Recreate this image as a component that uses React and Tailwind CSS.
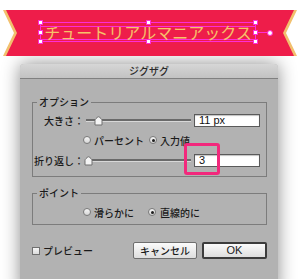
import React from 'react';

const jp = "font-['Noto_Sans_CJK_JP','Noto_Sans',sans-serif]";

const Handle = ({ className }) => (
    <span className={`absolute w-[5px] h-[5px] bg-white border border-[#ff2cd6] ${className}`} />
);

const Radio = ({ checked }) => (
    <span className="w-[8px] h-[8px] rounded-full border border-[#7a7a7a] bg-gradient-to-b from-[#f6f6f6] to-[#d6d6d6] flex items-center justify-center">
        {checked && <span className="w-[3px] h-[3px] rounded-full bg-[#1e1e1e]" />}
    </span>
);

const Slider = ({ thumbClass }) => (
    <div className="relative w-[105px] h-[12px] flex items-center">
        <div className="w-full h-[3px] bg-[#6a6a6a] border-b border-[#d8d8d8]" />
        <svg className={`absolute top-[1px] ${thumbClass}`} width="9" height="10" viewBox="0 0 9 10">
            <path d="M1 9 V4.5 Q1 3.5 2 2.5 L3.8 1 Q4.5 0.5 5.2 1 L7 2.5 Q8 3.5 8 4.5 V9 Z" fill="#f4f4f4" stroke="#707070" strokeWidth="1" />
        </svg>
    </div>
);

const Field = ({ children }) => (
    <div className="ml-[3px] w-[66px] h-[13px] bg-white border border-[#5a5a5a] shadow-[inset_0_1px_1px_rgba(0,0,0,0.25)] flex items-center pl-[4px] text-[11px] font-normal leading-none text-[#111] font-['Liberation_Sans',sans-serif]">
        {children}
    </div>
);

const App = () => {
    return (
        <div className={`w-[300px] h-[279px] overflow-hidden bg-white ${jp}`}>
            {/* ribbon */}
            <div className="relative mt-[10px] h-[46px] flex items-center">
                <svg className="absolute inset-0" width="300" height="46" viewBox="0 0 300 46">
                    <polygon points="3,0 297,0 286,23 297,46 3,46 14,23" fill="#f2c06e" />
                    <polygon points="6,0 294,0 283,23 294,46 6,46 17,23" fill="#ee1d4a" />
                </svg>
                <div className="relative ml-[40px] w-[216px] h-[20px] border border-[#ff2cd6] flex items-center justify-center -mt-[2px]">
                    <span className="absolute left-0 right-0 top-[3px] h-[14px] border-y border-[#ff2cd6]" />
                    <span className="relative text-[16px] leading-none text-[#f6c26a]">チュートリアルマニアックス</span>
                    <Handle className="-left-[3px] -top-[3px]" />
                    <Handle className="left-[105px] -top-[3px]" />
                    <Handle className="-right-[3px] -top-[3px]" />
                    <Handle className="-left-[3px] top-[7px]" />
                    <Handle className="-right-[3px] top-[7px]" />
                    <Handle className="-left-[3px] -bottom-[3px]" />
                    <Handle className="left-[105px] -bottom-[3px]" />
                    <Handle className="-right-[3px] -bottom-[3px]" />
                    <span className="absolute left-[216px] top-[9px] w-[11px] h-[1px] bg-[#ff2cd6]" />
                    <span className="absolute left-[226px] top-[7px] w-[6px] h-[6px] rounded-full bg-white border border-[#ff2cd6]" />
                </div>
            </div>

            {/* dialog */}
            <div className="ml-[20px] mt-[8px] w-[258px] h-[230px] rounded-t-[4px] bg-[#b2b2b2] shadow-[0_0_18px_rgba(0,0,0,0.45)]">
                <div className="h-[15px] rounded-t-[4px] bg-gradient-to-b from-[#d6d6d6] to-[#c2c2c2] border-b border-[#808080] flex items-center justify-center text-[10px] font-medium leading-none text-[#2a2a2a]">
                    ジグザグ
                </div>

                <div className="px-[12px] pr-[11px] pt-[17px] text-[10px] font-medium text-[#1a1a1a]">
                    <fieldset className="border border-[#7c7c7c] pb-[9px]">
                        <legend className="ml-[4px] px-[2px] leading-[12px]">オプション</legend>
                        <div className="flex items-center mt-[6px] h-[13px]">
                            <span className="w-[51px] text-right">大きさ：</span>
                            <div className="ml-[2px]"><Slider thumbClass="left-[8px]" /></div>
                            <Field>11 px</Field>
                        </div>
                        <div className="flex items-center mt-[7px] h-[12px]">
                            <div className="ml-[50px] w-[66px] flex items-center gap-[3px]"><Radio />パーセント</div>
                            <div className="flex items-center gap-[3px]"><Radio checked />入力値</div>
                        </div>
                        <div className="flex items-center mt-[8px] h-[13px]">
                            <span className="w-[51px] text-right">折り返し：</span>
                            <div className="ml-[2px]"><Slider thumbClass="left-[-2px]" /></div>
                            <div className="relative">
                                <Field>3</Field>
                                <span className="absolute -left-[7px] -top-[11px] w-[36px] h-[32px] rounded-[3px] border-[3px] border-[#f2287c]" />
                            </div>
                        </div>
                    </fieldset>

                    <fieldset className="mt-[10px] border border-[#7c7c7c] pb-[6px]">
                        <legend className="ml-[4px] px-[2px] leading-[12px]">ポイント</legend>
                        <div className="flex items-center mt-[7px] h-[12px]">
                            <div className="ml-[50px] w-[65px] flex items-center gap-[3px]"><Radio />滑らかに</div>
                            <div className="flex items-center gap-[4px]"><Radio checked />直線的に</div>
                        </div>
                    </fieldset>

                    <div className="mt-[17px] flex items-center">
                        <div className="flex items-center gap-[3px]">
                            <span className="w-[8px] h-[8px] border border-[#707070] bg-gradient-to-b from-[#f6f6f6] to-[#dcdcdc]" />
                            プレビュー
                        </div>
                        <button className="ml-auto w-[64px] h-[17px] border border-[#6e6e6e] rounded-[2px] bg-gradient-to-b from-[#fbfbfb] to-[#dedede] text-[10px] leading-none">
                            キャンセル
                        </button>
                        <button className="ml-[5px] w-[65px] h-[17px] border-2 border-[#3c3c3c] rounded-[2px] bg-gradient-to-b from-[#fbfbfb] to-[#dedede] text-[11px] font-normal leading-none font-['Liberation_Sans',sans-serif]">
                            OK
                        </button>
                    </div>
                </div>
            </div>
        </div>
    );
};

export default App;
